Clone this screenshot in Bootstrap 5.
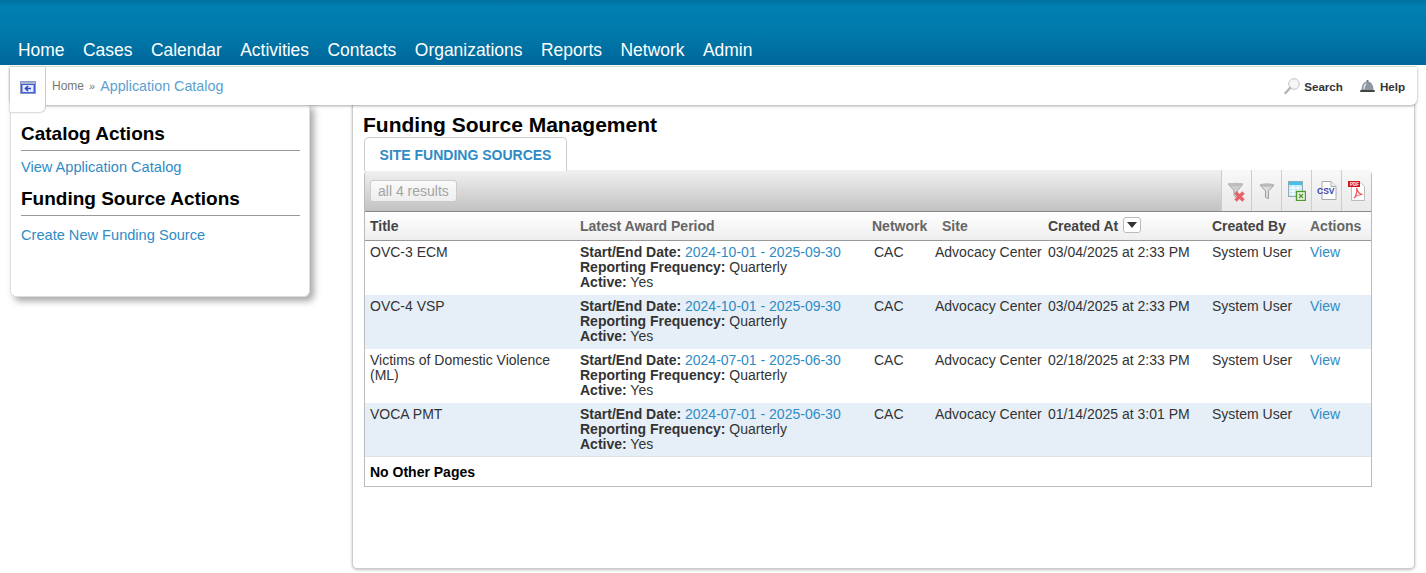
<!DOCTYPE html>
<html lang="en">
<head>
<meta charset="utf-8">
<title>Funding Source Management</title>
<link rel="stylesheet" href="https://cdn.jsdelivr.net/npm/bootstrap@5.3.0/dist/css/bootstrap.min.css">
<style>
html,body{height:573px;overflow:hidden}
body{font-family:"Liberation Sans",Arial,sans-serif;font-size:14px;line-height:15px;color:#333;background:#fff}
a{color:#2f8bc5;text-decoration:none}
.topbar{height:65px;background:linear-gradient(#006f9f 0,#007fb1 6px,#007aab 50%,#00669a 100%);padding:0 0 4px 18px;gap:18.5px}
.topbar a{color:#fff;font-size:17.45px;line-height:22px}
.crumbs{height:38px;margin:2px 9px 0 10px;background:#fff;border-radius:0 0 6px 6px;box-shadow:0 1px 3px rgba(0,0,0,.35),0 -1px 1px rgba(0,0,0,.12);padding-left:42px;padding-right:12px;position:relative;z-index:3}
.crumb-home{color:#777;font-size:12px}
.crumb-sep{color:#777;font-size:11px;margin:0 5px}
.crumb-cur{color:#5a9fd0;font-size:14.3px}
.backtab{position:absolute;left:0;top:0;width:36px;height:46px;background:#fff;border-right:1px solid #ccc;border-bottom:1px solid #ddd;border-radius:0 0 6px 0;box-shadow:-1px 0 2px rgba(0,0,0,.12);padding:14px 0 0 10px}
.backtab svg{display:block}
.tool-link{color:#333;font-weight:700;font-size:11.6px;gap:4px;margin-left:16px}
.content{margin-top:-1px}
.sidepanel{width:300px;height:193px;margin-left:10px;margin-right:42px;background:#fff;border-radius:0 0 6px 6px;border:1px solid #ddd;border-top:0;box-shadow:4px 4px 7px rgba(0,0,0,.35);padding:18px 9px 0 10px;flex:none}
.side-title{font-size:19px;line-height:23px;font-weight:700;color:#000;margin:0;padding-bottom:5px;border-bottom:1px solid #999}
.side-link{display:block;font-size:14.6px;line-height:17px;margin:8px 0 11px}
.side-link-low{margin-top:11px}
.mainpanel{width:1063px;height:465px;background:#fff;border:1px solid #ccc;border-top:0;border-radius:0 0 5px 5px;box-shadow:0 1px 3px rgba(0,0,0,.25);padding:9px 0 0 10px;flex:none}
.page-title{font-size:21px;line-height:23px;font-weight:700;color:#000;margin:0 0 1px}
.fundtab{display:inline-block;margin-left:1px;width:203px;height:34px;line-height:34px;text-align:center;border:1px solid #ccc;border-bottom:0;border-radius:5px 5px 0 0;color:#2f8bc5;font-weight:700;font-size:14px;position:relative;z-index:1;background:#fff;vertical-align:top}
.gridbox{width:1008px;margin-left:1px;height:317px;border:1px solid #bbb;border-top:0;border-radius:5px 5px 0 0;margin-top:-1px}
.gridbar{height:42px;background:linear-gradient(#f1f1f1,#c2c2c2);border-bottom:1px solid #888;border-radius:5px 5px 0 0;padding-left:5px}
.count-pill{border:1px solid #ccc;border-radius:3px;background:linear-gradient(#fafafa,#eee);color:#a3a3a3;font-size:14px;line-height:20px;padding:0 7px}
.icon-cell{width:30px;height:41px;background:linear-gradient(#f8f8f8,#e9e9e9);border-left:1px solid #ccc;padding-top:11px;text-align:center}
.icon-cell svg{display:block;margin:0 auto}
.fund-table{table-layout:fixed;width:1006px;margin:0}
.fund-table>thead>tr>th{height:28px;padding:2px 0 0 5px;vertical-align:middle;background:linear-gradient(#fff,#eee);border-bottom:1px solid #999;color:#666;font-size:14px;font-weight:700;white-space:nowrap}
.fund-table>thead>tr>th.th-dark{color:#444}
.fund-table>thead>tr>th.th-raised{padding-top:0}
.fund-table>tbody>tr>td{height:54px;padding:4px 0 0 5px;vertical-align:top;border:0;color:#333;background:#fff;font-size:14px;line-height:15px;white-space:nowrap}
.fund-table>tbody>tr:first-child>td{height:55px}
.fund-table>tbody>tr:last-child>td{height:53px}
.fund-table>tbody>tr:nth-child(even)>td{background:#e6eff7}
.fund-table>tbody>tr>td.wrap-cell{white-space:normal;padding-right:15px}
.fund-table>tbody>tr>td.net-cell{padding-left:7px}
.fund-table b{font-weight:700}
.sort-btn{display:inline-block;width:18px;height:16px;margin-left:1px;border:1px solid #bbb;border-radius:3px;background:#fff;vertical-align:-2px;position:relative}
.sort-btn::after{content:"";position:absolute;left:3px;top:4px;border:5px solid transparent;border-top:6px solid #333;border-bottom:0}
.pager{font-weight:700;color:#000;padding:8px 5px 0;line-height:15px;border-top:1px solid #e3e3e3}
</style>
</head>
<body>
<nav class="topbar d-flex align-items-end">
  <a href="#">Home</a><a href="#">Cases</a><a href="#">Calendar</a><a href="#">Activities</a><a href="#">Contacts</a><a href="#">Organizations</a><a href="#">Reports</a><a href="#">Network</a><a href="#">Admin</a>
</nav>
<div class="crumbs d-flex align-items-center justify-content-between">
  <div class="backtab">
    <svg width="16" height="13" viewBox="0 0 16 13"><rect x=".5" y=".5" width="15" height="12" fill="#3f5fd8" stroke="#8d9ac9"/><rect x="1" y="1" width="14" height="2" fill="#a9b3c9"/><rect x="2.500" y="4" width="11" height="7" fill="#e4eaff"/><path d="M11 7.500H6M8 5 5.500 7.500 8 10" fill="none" stroke="#2b45c4" stroke-width="1.600"/></svg>
  </div>
  <div class="d-flex align-items-center">
    <a class="crumb-home" href="#">Home</a><span class="crumb-sep">»</span><a class="crumb-cur" href="#">Application Catalog</a>
  </div>
  <div class="d-flex align-items-center">
    <a class="tool-link d-flex align-items-center" href="#">
      <svg width="16" height="17" viewBox="0 0 16 17"><circle cx="10" cy="6" r="5.300" fill="#f6f6f6" stroke="#c4c4c4"/><path d="M6 10 1.500 15" stroke="#b4b4b4" stroke-width="2.400" stroke-linecap="round"/></svg>Search</a>
    <a class="tool-link d-flex align-items-center" href="#">
      <svg width="17" height="14" viewBox="0 0 17 14"><path d="M2.500 11.500C2.500 5.500 5 2.500 8.500 2.500S14.500 5.500 14.500 11.500Z" fill="#8f96a3"/><path d="M7 4.500C5.500 6 5 8 5 10" fill="none" stroke="#dcdfe4" stroke-width="1.500"/><rect x="7.600" y="1" width="1.800" height="2" fill="#777"/><rect x="1" y="11" width="15" height="2" rx="1" fill="#444"/></svg>Help</a>
  </div>
</div>
<div class="content d-flex align-items-start">
  <aside class="sidepanel">
    <h2 class="side-title">Catalog Actions</h2>
    <a class="side-link" href="#">View Application Catalog</a>
    <h2 class="side-title">Funding Source Actions</h2>
    <a class="side-link side-link-low" href="#">Create New Funding Source</a>
  </aside>
  <main class="mainpanel">
    <h1 class="page-title">Funding Source Management</h1>
    <a class="fundtab" href="#">SITE FUNDING SOURCES</a>
    <div class="gridbox">
      <div class="gridbar d-flex align-items-center justify-content-between">
        <span class="count-pill">all 4 results</span>
        <div class="d-flex align-self-start">
          <div class="icon-cell"><svg width="19" height="22" viewBox="0 0 19 22"><path d="M1 3h15L10.500 9.500V17L7 14.500V9.500Z" fill="#cfcfcf" stroke="#a3a3a3"/><ellipse cx="8.500" cy="3.500" rx="7.500" ry="1.800" fill="#bdbdbd"/><path d="M8.500 11.500l8 8M16.500 11.500l-8 8" stroke="#e6636c" stroke-width="3.400"/></svg></div>
          <div class="icon-cell"><svg width="16" height="20" viewBox="0 0 16 20"><path d="M1 4h14L9.500 10v7.500L6.500 16.500V10Z" fill="#dcdcdc" stroke="#9c9c9c"/><ellipse cx="8" cy="4" rx="7" ry="1.800" fill="#b9b9b9"/></svg></div>
          <div class="icon-cell"><svg width="18" height="20" viewBox="0 0 18 20"><rect x=".5" y=".5" width="14" height="15" fill="#c3e7fb" stroke="#92a9b3"/><path d="M1 7h13M1 10h13M1 13h13M5 4v11M10 4v11" stroke="#fff"/><rect x="1" y="1" width="13" height="3" fill="#43c1ee"/><rect x="8.500" y="10.500" width="9" height="9" fill="#eef7e6" stroke="#4f9a2d" stroke-width="1.400"/><path d="M11 13l4 4M15 13l-4 4" stroke="#4f9a2d" stroke-width="1.400"/></svg></div>
          <div class="icon-cell"><svg width="20" height="20" viewBox="0 0 20 20"><path d="M5 .5h9l5 5v13H5Z" fill="#fff" stroke="#aaa"/><path d="M14 .5v5h5" fill="#eee" stroke="#aaa"/><text x="0" y="13" font-family="Liberation Sans" font-size="8.500" font-weight="700" fill="#3a3fb0">CSV</text></svg></div>
          <div class="icon-cell"><svg width="18" height="20" viewBox="0 0 18 20"><path d="M3.500 1.500h9l4 4v14h-13Z" fill="#fff" stroke="#bbb"/><rect x="0" y="0" width="12" height="6" fill="#d3121a"/><text x="2" y="5" font-family="Liberation Sans" font-size="4.500" font-weight="700" fill="#fff">PDF</text><path d="M6 17c3-3 3-7 2.500-10 1 4 3 6 6 6.500-3 0-6 1-8.500 3.500Z" fill="none" stroke="#ee5a5f" stroke-width="1.200"/></svg></div>
        </div>
      </div>
      <table class="table fund-table">
        <colgroup><col style="width:210px"><col style="width:292px"><col style="width:63px"><col style="width:113px"><col style="width:164px"><col style="width:98px"><col style="width:66px"></colgroup>
        <thead><tr>
          <th class="th-dark">Title</th><th>Latest Award Period</th><th>Network</th><th style="padding-left:12px">Site</th><th class="th-dark th-raised">Created At <span class="sort-btn"></span></th><th class="th-dark">Created By</th><th>Actions</th>
        </tr></thead>
        <tbody>
          <tr><td>OVC-3 ECM</td><td><b>Start/End Date:</b> <a href="#">2024-10-01 - 2025-09-30</a><br><b>Reporting Frequency:</b> Quarterly<br><b>Active:</b> Yes</td><td class="net-cell">CAC</td><td>Advocacy Center</td><td>03/04/2025 at 2:33 PM</td><td>System User</td><td><a href="#">View</a></td></tr>
          <tr><td>OVC-4 VSP</td><td><b>Start/End Date:</b> <a href="#">2024-10-01 - 2025-09-30</a><br><b>Reporting Frequency:</b> Quarterly<br><b>Active:</b> Yes</td><td class="net-cell">CAC</td><td>Advocacy Center</td><td>03/04/2025 at 2:33 PM</td><td>System User</td><td><a href="#">View</a></td></tr>
          <tr><td class="wrap-cell">Victims of Domestic Violence (ML)</td><td><b>Start/End Date:</b> <a href="#">2024-07-01 - 2025-06-30</a><br><b>Reporting Frequency:</b> Quarterly<br><b>Active:</b> Yes</td><td class="net-cell">CAC</td><td>Advocacy Center</td><td>02/18/2025 at 2:33 PM</td><td>System User</td><td><a href="#">View</a></td></tr>
          <tr><td>VOCA PMT</td><td><b>Start/End Date:</b> <a href="#">2024-07-01 - 2025-06-30</a><br><b>Reporting Frequency:</b> Quarterly<br><b>Active:</b> Yes</td><td class="net-cell">CAC</td><td>Advocacy Center</td><td>01/14/2025 at 3:01 PM</td><td>System User</td><td><a href="#">View</a></td></tr>
        </tbody>
      </table>
      <div class="pager">No Other Pages</div>
    </div>
  </main>
</div>
</body>
</html>
